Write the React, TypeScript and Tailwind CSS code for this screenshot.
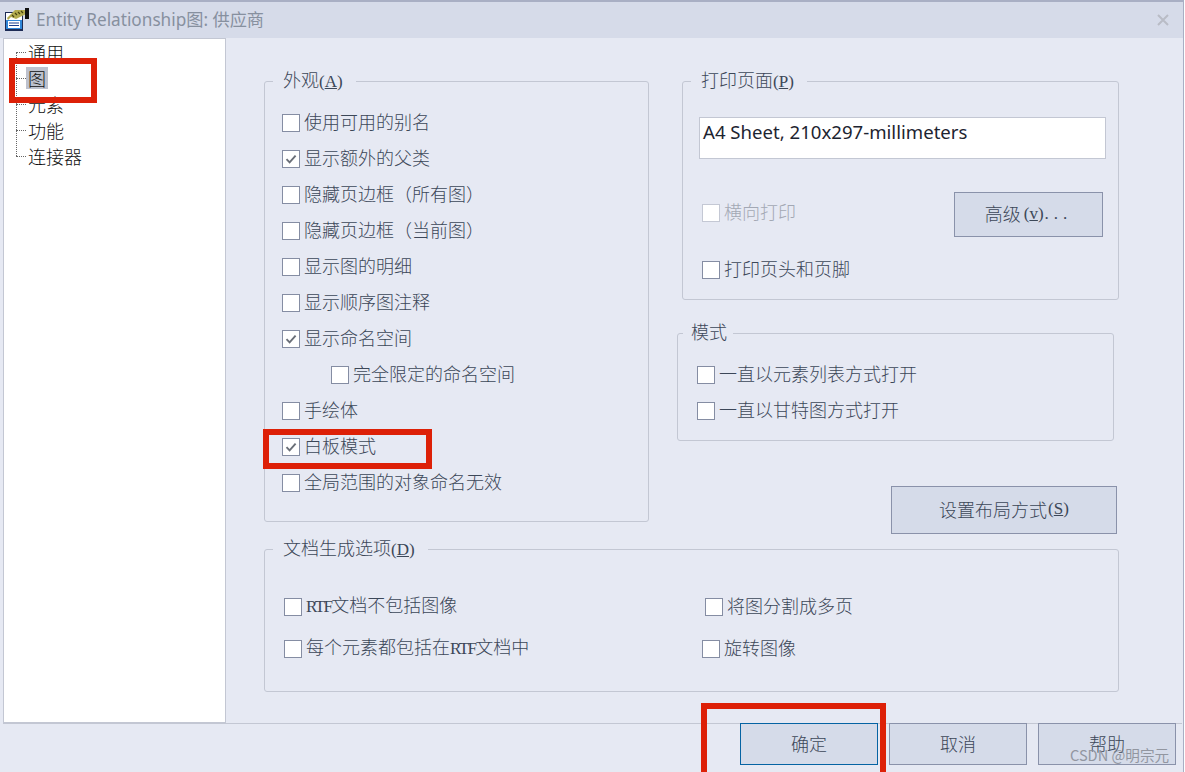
import React from "react";

const latin = "font-['Liberation_Serif'] text-[17px]";
const rtf = "font-['Liberation_Serif'] text-[17px] tracking-[-1.6px]";

function Box({ checked, disabled }: { checked?: boolean; disabled?: boolean }) {
  return (
    <span
      className={`flex h-[18px] w-[18px] shrink-0 items-center justify-center border bg-white ${
        disabled ? "border-[#c4c8d4]" : "border-[#858da3]"
      }`}
    >
      {checked && (
        <svg width="12" height="12" viewBox="0 0 12 12" fill="none">
          <path d="M1.5 6.2 L4.6 9.4 L10.6 2.6" stroke="#6a6f78" strokeWidth="1.9" />
        </svg>
      )}
    </span>
  );
}

function Check({
  label,
  checked,
  disabled,
  gap = "gap-[4px]",
}: {
  label: React.ReactNode;
  checked?: boolean;
  disabled?: boolean;
  gap?: string;
}) {
  return (
    <div className={`flex h-9 items-center ${gap} ${disabled ? "text-[#a3a8b4]" : ""}`}>
      <Box checked={checked} disabled={disabled} />
      <span className="whitespace-nowrap pb-[4px]">{label}</span>
    </div>
  );
}

function Group({
  title,
  hot,
  className,
  legend = "ml-[8px] pl-[10px] pr-[13px]",
  children,
}: {
  title: string;
  hot?: string;
  className: string;
  legend?: string;
  children: React.ReactNode;
}) {
  return (
    <fieldset className={`rounded-[3px] border border-[#c3c7d3] ${className}`}>
      <legend className={`h-6 pb-[3px] leading-5 whitespace-nowrap ${legend}`}>
        {title}
        {hot && (
          <span className={latin}>
            (<span className="underline">{hot}</span>)
          </span>
        )}
      </legend>
      {children}
    </fieldset>
  );
}

function Btn({
  children,
  className = "",
  primary,
}: {
  children: React.ReactNode;
  className?: string;
  primary?: boolean;
}) {
  return (
    <button
      className={`flex items-center justify-center border bg-[#d5dbe9] pb-[3px] ${
        primary ? "border-[#0563a3]" : "border-[#8a92aa]"
      } ${className}`}
    >
      {children}
    </button>
  );
}

function TreeRow({ label, selected }: { label: string; selected?: boolean }) {
  return (
    <div className="flex h-[26px] items-center">
      <span className="w-[10px] border-t border-dotted border-[#666]" />
      <span
        className={`flex h-[22px] items-center px-[2px] pb-[1px] text-[#111] ${
          selected ? "bg-[#bdc1cd]" : ""
        }`}
      >
        {label}
      </span>
    </div>
  );
}

function AppIcon() {
  return (
    <svg width="26" height="24" viewBox="0 0 26 24" className="shrink-0">
      <rect x="1" y="4" width="18" height="19" fill="#1d2b55" />
      <rect x="2" y="5" width="16" height="7" fill="#ffffff" />
      <rect x="2" y="12" width="16" height="9" fill="#2f86d8" />
      <rect x="4" y="13" width="12" height="7" fill="#ffffff" />
      <path d="M5 15h10M5 17.5h10" stroke="#1c3f8c" strokeWidth="1.1" />
      <path d="M3 10 L11 2 L22 2 L22 6 L12 11 L7 9 L4 12 Z" fill="#b3ab4e" />
      <path d="M8 7l2 2M11 5l2 2M14 4l2 2M17 3l2 2" stroke="#47430f" strokeWidth="1.2" />
      <rect x="21" y="0" width="4" height="11" fill="#111111" />
    </svg>
  );
}

export default function App() {
  return (
    <div className="relative flex h-[772px] w-[1185px] flex-col overflow-hidden bg-[#e6e9f3] font-['Noto_Sans_CJK_SC','Noto_Sans',sans-serif] text-[18px] font-light leading-none text-[#3c4758]">
      {/* title bar */}
      <header className="flex h-[38px] shrink-0 items-center gap-[6px] border-t-2 border-[#a9afc4] bg-[#d6dbe9] pl-[4px]">
        <AppIcon />
        <span className="whitespace-nowrap pb-[1px] font-['Noto_Sans','Noto_Sans_CJK_SC',sans-serif] text-[17.2px] font-normal text-[#87909f]">
          Entity Relationship图: 供应商
        </span>
        <svg width="12" height="12" viewBox="0 0 12 12" className="ml-auto mr-[16px]">
          <path d="M1 1 L11 11 M11 1 L1 11" stroke="#b9bcc6" strokeWidth="2" />
        </svg>
      </header>

      {/* body */}
      <div className="flex min-h-0 flex-1">
        <nav className="ml-[3px] w-[223px] shrink-0 border border-[#c3c7d3] bg-white pl-[12px]">
          <div className="relative">
            <span className="absolute left-0 top-[13px] h-[104px] border-l border-dotted border-[#666]" />
            <TreeRow label="通用" />
            <TreeRow label="图" selected />
            <TreeRow label="元素" />
            <TreeRow label="功能" />
            <TreeRow label="连接器" />
          </div>
        </nav>

        <main className="flex flex-1 flex-col pl-[38px] pt-[31px]">
          <div className="flex items-start">
            <Group title="外观" hot="A" className="h-[453px] w-[385px]">
              <div className="pl-[17px] pt-[12px]">
                <Check label="使用可用的别名" />
                <Check label="显示额外的父类" checked />
                <Check label="隐藏页边框（所有图）" />
                <Check label="隐藏页边框（当前图）" />
                <Check label="显示图的明细" />
                <Check label="显示顺序图注释" />
                <Check label="显示命名空间" checked />
                <div className="pl-[49px]">
                  <Check label="完全限定的命名空间" />
                </div>
                <Check label="手绘体" />
                <Check label="白板模式" checked />
                <Check label="全局范围的对象命名无效" />
              </div>
            </Group>

            <div className="ml-[28px] flex w-[442px] flex-col">
              <Group title="打印页面" hot="P" className="ml-[5px] h-[231px] w-[437px]">
                <div className="pl-[16px] pt-[24px]">
                  <div className="h-[42px] w-[407px] border border-[#c3c7d3] bg-white pl-[3px] pt-[3px] font-['Noto_Sans',sans-serif] text-[18.6px] font-normal leading-[22px] text-[#1d2430]">
                    A4 Sheet, 210x297-millimeters
                  </div>
                  <div className="mt-[33px] flex items-start pl-[3px]">
                    <div className="mt-[3px]">
                      <Check label="横向打印" disabled />
                    </div>
                    <Btn className="ml-[158px] h-[45px] w-[149px]">
                      高级
                      <span className={`${latin} ml-[3px]`}>
                        (<span className="underline">v</span>)<span className="ml-[1px] tracking-[5px]">...</span>
                      </span>
                    </Btn>
                  </div>
                  <div className="mt-[15px] pl-[3px]">
                    <Check label="打印页头和页脚" />
                  </div>
                </div>
              </Group>

              <Group
                title="模式"
                legend="ml-[5px] pl-[8px] pr-[6px]"
                className="mt-[21px] h-[120px] w-[437px]"
              >
                <div className="pl-[19px] pt-[12px]">
                  <Check label="一直以元素列表方式打开" />
                  <Check label="一直以甘特图方式打开" />
                </div>
              </Group>

              <Btn className="mr-[2px] mt-[45px] h-[48px] w-[226px] self-end">
                设置布局方式
                <span className={`${latin} ml-[1px]`}>
                  (<span className="underline">S</span>)
                </span>
              </Btn>
            </div>
          </div>

          <Group title="文档生成选项" hot="D" className="mt-[3px] h-[155px] w-[855px]">
            <div className="pt-[28px]">
              <div className="flex pl-[19px]">
                <div className="w-[421px]">
                  <Check
                    label={
                      <>
                        <span className={rtf}>RTF</span>文档不包括图像
                      </>
                    }
                  />
                </div>
                <Check label="将图分割成多页" />
              </div>
              <div className="mt-[6px] flex pl-[19px]">
                <div className="w-[418px]">
                  <Check
                    label={
                      <>
                        每个元素都包括在<span className={rtf}>RTF</span>文档中
                      </>
                    }
                  />
                </div>
                <Check label="旋转图像" />
              </div>
            </div>
          </Group>
        </main>
      </div>

      {/* footer */}
      <footer className="ml-[3px] mr-[3px] flex h-[49px] shrink-0 items-start justify-end gap-[11px] border-t border-[#c3c7d3] pr-[6px]">
        <Btn primary className="-mt-px h-[42px] w-[138px]">确定</Btn>
        <Btn className="-mt-px h-[42px] w-[138px]">取消</Btn>
        <Btn className="-mt-px h-[42px] w-[138px]">帮助</Btn>
      </footer>

      {/* window edge, annotations and watermark lying over the dialog */}
      <div className="absolute bottom-0 right-0 top-0 w-[2px] border-l border-[#a9afc4] bg-white" />
      <div className="absolute left-[9px] top-[58px] h-[45px] w-[88px] border-[6px] border-[#dd2007]" />
      <div className="absolute left-[263px] top-[429px] h-[40px] w-[169px] border-[6px] border-[#dd2007]" />
      <div className="absolute left-[701px] top-[703px] h-[80px] w-[185px] border-[6px] border-[#dd2007]" />
      <div className="absolute left-[1070px] top-[748px] whitespace-nowrap text-[14.6px] font-normal text-[#8b8f99] opacity-90">
        CSDN @明宗元
      </div>
    </div>
  );
}
